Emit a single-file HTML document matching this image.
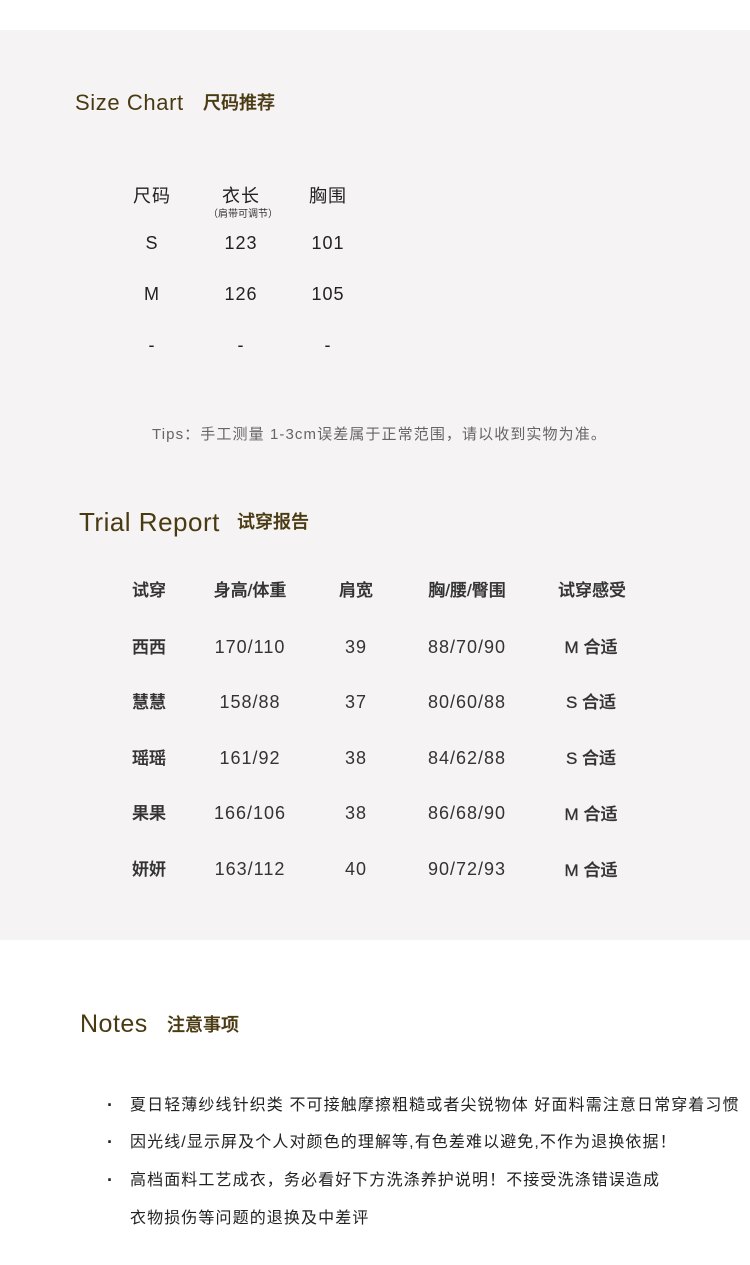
<!DOCTYPE html>
<html><head><meta charset="utf-8"><style>
*{margin:0;padding:0}
body{width:750px;height:1265px;background:#fff;position:relative;font-family:"Liberation Sans","Noto Sans CJK SC",sans-serif;overflow:hidden}
.bg{position:absolute;left:0;top:30px;width:750px;height:910px;background:#f5f3f4}
.a{position:absolute;white-space:nowrap;line-height:1}
.h{color:#4a3a12}
.c{transform:translateX(-50%);text-align:center}
.t{color:#222;font-size:18px;letter-spacing:1px}
.r{color:#333;font-size:18px;letter-spacing:1px}
.b{font-weight:500;color:#333;font-size:17px;-webkit-text-stroke:0.3px #333}
.n{color:#222;font-size:16px;letter-spacing:1.1px}
</style></head><body>
<div class="bg"></div>
<div class="a h" style="left:75px;top:92px;font-size:22px;letter-spacing:0.6px">Size Chart</div>
<div class="a h" style="left:203px;top:94px;font-size:18px;font-weight:500;-webkit-text-stroke:0.3px #4a3a12">尺码推荐</div>

<div class="a t c" style="left:152px;top:187px">尺码</div>
<div class="a t c" style="left:241px;top:187px">衣长</div>
<div class="a c" style="left:243px;top:210px;font-size:10px;color:#333">（肩带可调节）</div>
<div class="a t c" style="left:328px;top:187px">胸围</div>
<div class="a t c" style="left:152px;top:234px">S</div>
<div class="a t c" style="left:241px;top:234px">123</div>
<div class="a t c" style="left:328px;top:234px">101</div>
<div class="a t c" style="left:152px;top:285px">M</div>
<div class="a t c" style="left:241px;top:285px">126</div>
<div class="a t c" style="left:328px;top:285px">105</div>
<div class="a t c" style="left:152px;top:336px">-</div>
<div class="a t c" style="left:241px;top:336px">-</div>
<div class="a t c" style="left:328px;top:336px">-</div>
<div class="a" style="left:152px;top:427px;font-size:15px;letter-spacing:1.1px;color:#666">Tips：手工测量 1-3cm误差属于正常范围，请以收到实物为准。</div>

<div class="a h" style="left:79px;top:509px;font-size:26px;letter-spacing:0.5px">Trial Report</div>
<div class="a h" style="left:237px;top:513px;font-size:18px;font-weight:500;-webkit-text-stroke:0.3px #4a3a12">试穿报告</div>

<div class="a b c" style="left:149px;top:582px">试穿</div>
<div class="a b c" style="left:250px;top:582px">身高/体重</div>
<div class="a b c" style="left:356px;top:582px">肩宽</div>
<div class="a b c" style="left:467px;top:582px">胸/腰/臀围</div>
<div class="a b c" style="left:592px;top:582px">试穿感受</div>

<div class="a b c" style="left:149px;top:639px">西西</div>
<div class="a r c" style="left:250px;top:638px">170/110</div>
<div class="a r c" style="left:356px;top:638px">39</div>
<div class="a r c" style="left:467px;top:638px">88/70/90</div>
<div class="a b c" style="left:591px;top:639px">M 合适</div>

<div class="a b c" style="left:149px;top:694px">慧慧</div>
<div class="a r c" style="left:250px;top:693px">158/88</div>
<div class="a r c" style="left:356px;top:693px">37</div>
<div class="a r c" style="left:467px;top:693px">80/60/88</div>
<div class="a b c" style="left:591px;top:694px">S 合适</div>

<div class="a b c" style="left:149px;top:750px">瑶瑶</div>
<div class="a r c" style="left:250px;top:749px">161/92</div>
<div class="a r c" style="left:356px;top:749px">38</div>
<div class="a r c" style="left:467px;top:749px">84/62/88</div>
<div class="a b c" style="left:591px;top:750px">S 合适</div>

<div class="a b c" style="left:149px;top:805px">果果</div>
<div class="a r c" style="left:250px;top:804px">166/106</div>
<div class="a r c" style="left:356px;top:804px">38</div>
<div class="a r c" style="left:467px;top:804px">86/68/90</div>
<div class="a b c" style="left:591px;top:806px">M 合适</div>

<div class="a b c" style="left:149px;top:861px">妍妍</div>
<div class="a r c" style="left:250px;top:860px">163/112</div>
<div class="a r c" style="left:356px;top:860px">40</div>
<div class="a r c" style="left:467px;top:860px">90/72/93</div>
<div class="a b c" style="left:591px;top:862px">M 合适</div>

<div class="a h" style="left:80px;top:1012px;font-size:25px;letter-spacing:0.5px">Notes</div>
<div class="a h" style="left:167px;top:1016px;font-size:18px;font-weight:500;-webkit-text-stroke:0.3px #4a3a12">注意事项</div>

<div class="a n" style="left:107px;top:1096px;font-weight:bold;font-size:18px">·</div>
<div class="a n" style="left:130px;top:1098px">夏日轻薄纱线针织类 不可接触摩擦粗糙或者尖锐物体 好面料需注意日常穿着习惯</div>
<div class="a n" style="left:107px;top:1133px;font-weight:bold;font-size:18px">·</div>
<div class="a n" style="left:130px;top:1135px">因光线/显示屏及个人对颜色的理解等,有色差难以避免,不作为退换依据！</div>
<div class="a n" style="left:107px;top:1171px;font-weight:bold;font-size:18px">·</div>
<div class="a n" style="left:130px;top:1173px">高档面料工艺成衣，务必看好下方洗涤养护说明！不接受洗涤错误造成</div>
<div class="a n" style="left:130px;top:1211px">衣物损伤等问题的退换及中差评</div>
</body></html>
